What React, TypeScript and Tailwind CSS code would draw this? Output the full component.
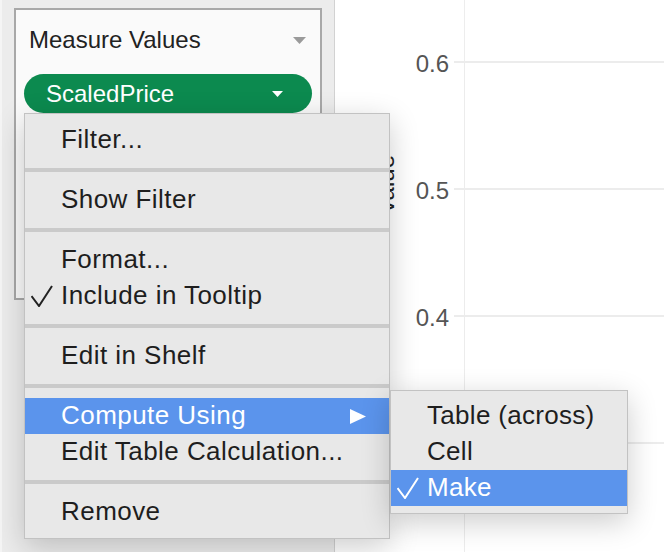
import React from "react";

type Item = { label: string; checked?: boolean; active?: boolean; submenu?: boolean };

// groups of menu items, separated by thick rules
const MENU: Item[][] = [
  [{ label: "Filter..." }],
  [{ label: "Show Filter" }],
  [{ label: "Format..." }, { label: "Include in Tooltip", checked: true }],
  [{ label: "Edit in Shelf" }],
  [{ label: "Compute Using", active: true, submenu: true }, { label: "Edit Table Calculation..." }],
  [{ label: "Remove" }],
];

const SUBMENU: Item[] = [
  { label: "Table (across)" },
  { label: "Cell" },
  { label: "Make", checked: true, active: true },
];

const TICKS = ["0.6", "0.5", "0.4", "0.3"];

function Check({ white }: { white?: boolean }) {
  return (
    <svg width="22" height="22" viewBox="0 0 22 22" className="ml-[6px]">
      <polyline
        points="0.5,11 8,21 21,1"
        fill="none"
        stroke={white ? "#ffffff" : "#222222"}
        strokeWidth="2"
        strokeLinejoin="miter"
      />
    </svg>
  );
}

function MenuRow({ item }: { item: Item }) {
  return (
    <div
      className={`flex items-center h-[36px] ${
        item.active ? "bg-[#5b94ec] text-white" : "text-[#1e1e1e]"
      }`}
    >
      <div className="w-[36px] shrink-0 flex items-center">
        {item.checked && <Check white={item.active} />}
      </div>
      <span className="whitespace-nowrap -mt-[1px]">{item.label}</span>
      {item.submenu && (
        <svg width="16" height="15" viewBox="0 0 16 15" className="ml-auto mr-[23px]">
          <polygon points="0,0 16,7.5 0,15" fill="#ffffff" />
        </svg>
      )}
    </div>
  );
}

export default function App() {
  return (
    <div className="relative w-[664px] h-[552px] overflow-hidden flex bg-white font-['Liberation_Sans',Arial,sans-serif]">
      {/* left shelf panel */}
      <div className="w-[335px] shrink-0 bg-[#ececec] border-l-2 border-l-[#f5f5f5] border-r border-r-[#d2d2d2] pt-[8px] pl-[12px]">
        <div className="w-[308px] h-[292px] border-2 border-[#a8a8a8] bg-[#fafafa]">
          <div className="flex items-center justify-between h-[60px] pl-[13px] pr-[14px]">
            <span className="text-[24px] text-[#222]">Measure Values</span>
            <svg width="13" height="7" viewBox="0 0 13 7">
              <polygon points="0,0 13,0 6.5,7" fill="#9a9a9a" />
            </svg>
          </div>
          <div className="mt-[4px] mx-[8px] h-[39px] rounded-full bg-[#0c8a4f] flex items-center justify-between pl-[22px] pr-[29px]">
            <span className="text-[24px] text-white">ScaledPrice</span>
            <svg width="11" height="6" viewBox="0 0 11 6">
              <polygon points="0,0 11,0 5.5,6" fill="#ffffff" />
            </svg>
          </div>
        </div>
      </div>

      {/* chart */}
      <div className="flex-1 flex">
        <div className="w-[64px] shrink-0 pl-[38px] pt-[155px]">
          <span className="block text-[24px] leading-[26px] text-[#222] [writing-mode:vertical-rl] rotate-180">
            Value
          </span>
        </div>
        <div className="flex-1 flex flex-col">
          <div className="flex h-[61px] shrink-0">
            <div className="w-[65px] shrink-0" />
            <div className="flex-1 border-l border-[#ededed]" />
          </div>
          {TICKS.map((t) => (
            <div key={t} className="flex h-[127px] shrink-0">
              <div className="w-[55px] shrink-0 pr-[5px] text-right text-[24px] leading-[28px] -mt-[11px] text-[#555]">
                {t}
              </div>
              <div className="w-[10px] shrink-0 border-t-2 border-[#ececec]" />
              <div className="flex-1 border-t-2 border-l border-[#ececec]" />
            </div>
          ))}
        </div>
      </div>

      {/* context menu */}
      <div className="absolute left-[24px] top-[113px] w-[366px] bg-[#e8e8e8] border border-[#c2c2c2] shadow-[0_8px_28px_rgba(0,0,0,0.2)] py-[8px] text-[26px] tracking-[0.45px]">
        {MENU.map((group, gi) => (
          <div key={gi}>
            {gi > 0 && <div className="h-[4px] my-[10px] bg-[#cacaca]" />}
            {group.map((item) => (
              <MenuRow key={item.label} item={item} />
            ))}
          </div>
        ))}
      </div>

      {/* compute using submenu */}
      <div className="absolute left-[390px] top-[390px] w-[238px] bg-[#e8e8e8] border border-[#c2c2c2] shadow-[0_8px_28px_rgba(0,0,0,0.2)] py-[7px] text-[26px] tracking-[0.3px]">
        {SUBMENU.map((item) => (
          <MenuRow key={item.label} item={item} />
        ))}
      </div>
    </div>
  );
}
